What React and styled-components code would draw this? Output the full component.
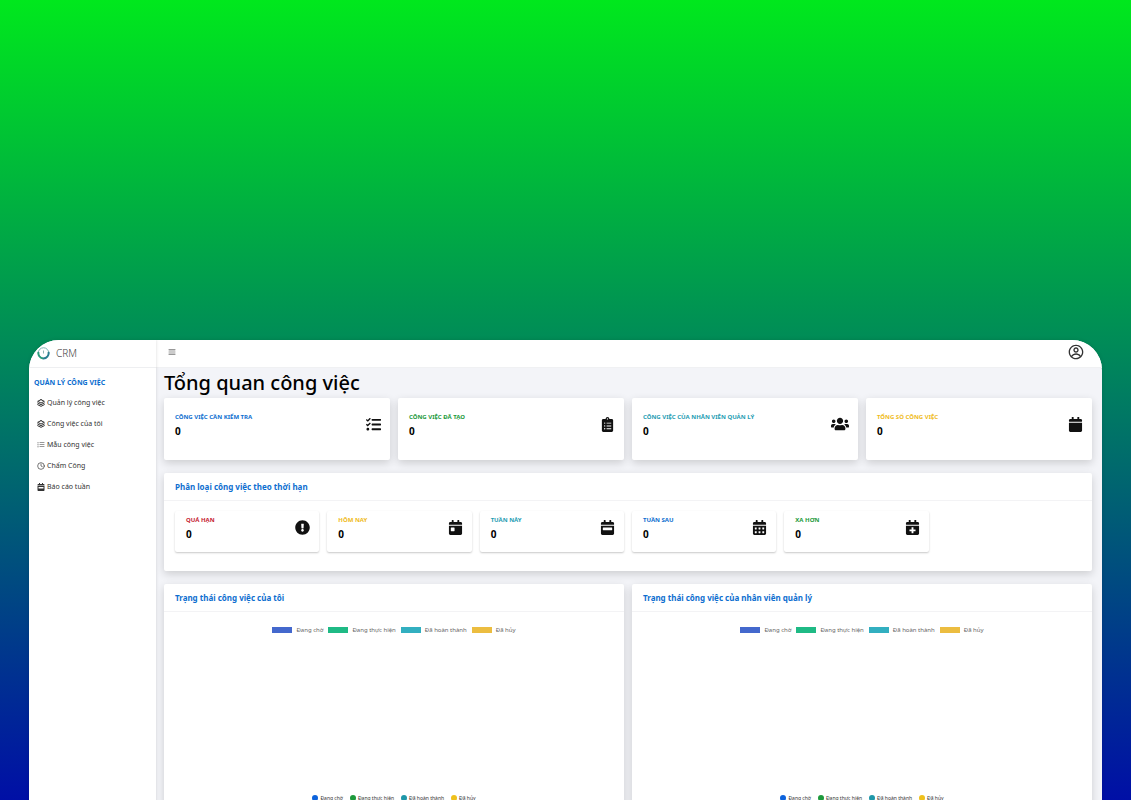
import React from "react";
import styled, { createGlobalStyle } from "styled-components";
import {
  FaTasks,
  FaClipboardList,
  FaUsers,
  FaCalendar,
  FaExclamationCircle,
  FaCalendarDay,
  FaCalendarWeek,
  FaCalendarAlt,
  FaCalendarPlus,
} from "react-icons/fa";
import { FiLayers, FiClock } from "react-icons/fi";
import { BsListUl } from "react-icons/bs";
import { CgProfile } from "react-icons/cg";
import { RxHamburgerMenu } from "react-icons/rx";

const blue = "#0d6ecf";
const green = "#1d9a3c";
const teal = "#1f9db3";
const yellow = "#efbb1c";
const red = "#c5202f";

const menu = [
  { text: "Quản lý công việc", icon: <FiLayers strokeWidth={3} /> },
  { text: "Công việc của tôi", icon: <FiLayers strokeWidth={3} /> },
  { text: "Mẫu công việc", icon: <BsListUl /> },
  { text: "Chấm Công", icon: <FiClock /> },
  { text: "Báo cáo tuần", icon: <FaCalendarWeek /> },
];

const totals = [
  { name: "Công việc cần kiểm tra", value: 0, color: blue, icon: <FaTasks /> },
  { name: "Công việc đã tạo", value: 0, color: green, icon: <FaClipboardList /> },
  { name: "Công việc của nhân viên quản lý", value: 0, color: teal, icon: <FaUsers size={18} /> },
  { name: "Tổng số công việc", value: 0, color: yellow, icon: <FaCalendar /> },
];

const deadlines = [
  { name: "Quá hạn", value: 0, color: red, icon: <FaExclamationCircle /> },
  { name: "Hôm nay", value: 0, color: yellow, icon: <FaCalendarDay /> },
  { name: "Tuần này", value: 0, color: teal, icon: <FaCalendarWeek /> },
  { name: "Tuần sau", value: 0, color: blue, icon: <FaCalendarAlt /> },
  { name: "Xa hơn", value: 0, color: green, icon: <FaCalendarPlus /> },
];

const statuses = [
  { name: "Đang chờ", bar: "#4468cd", dot: "#0d63dc" },
  { name: "Đang thực hiện", bar: "#1fba85", dot: "#1d9a3c" },
  { name: "Đã hoàn thành", bar: "#32afc0", dot: "#1f97a9" },
  { name: "Đã hủy", bar: "#ecbd40", dot: "#efc11c" },
];

const charts = ["Trạng thái công việc của tôi", "Trạng thái công việc của nhân viên quản lý"];

const Logo = () => (
  <svg width="13" height="13" viewBox="0 0 26 26" fill="none" aria-hidden="true">
    <circle cx="13" cy="12" r="10.5" stroke="#7fb5b5" strokeWidth="2" />
    <path d="M3 10a10.5 10.5 0 0 0 9 12.8" stroke="#2b9c7c" strokeWidth="4" />
    <path d="M12 22.8A10.5 10.5 0 0 0 23 10" stroke="#2a7f92" strokeWidth="4" />
    <path d="M13 7v6" stroke="#8fb5b5" strokeWidth="2" />
  </svg>
);

const Legend = ({ dots }) => (
  <LegendRow $dots={dots}>
    {statuses.map((s) => (
      <LegendItem key={s.name} $dots={dots}>
        {dots ? <Dot $color={s.dot} /> : <Bar $color={s.bar} />}
        {s.name}
      </LegendItem>
    ))}
  </LegendRow>
);

const App = () => {
  return (
    <Page>
      <GlobalStyle />
      <Window>
        <Sidebar>
          <Brand href="#">
            <Logo />
            CRM
          </Brand>
          <MenuTitle>QUẢN LÝ CÔNG VIỆC</MenuTitle>
          <nav>
            {menu.map((m) => (
              <MenuLink href="#" key={m.text}>
                {m.icon}
                {m.text}
              </MenuLink>
            ))}
          </nav>
        </Sidebar>
        <Main>
          <Topbar>
            <IconButton aria-label="Menu">
              <RxHamburgerMenu size={8} />
            </IconButton>
            <IconButton aria-label="Tài khoản">
              <CgProfile size={16} />
            </IconButton>
          </Topbar>
          <Content>
            <Title>Tổng quan công việc</Title>
            <Totals>
              {totals.map((t) => (
                <TotalCard key={t.name}>
                  <div>
                    <StatName $color={t.color}>{t.name}</StatName>
                    <StatValue>{t.value}</StatValue>
                  </div>
                  <StatIcon>{t.icon}</StatIcon>
                </TotalCard>
              ))}
            </Totals>
            <Panel>
              <PanelHead>Phân loại công việc theo thời hạn</PanelHead>
              <Deadlines>
                {deadlines.map((d) => (
                  <DeadlineCard key={d.name}>
                    <div>
                      <StatName $color={d.color}>{d.name}</StatName>
                      <StatValue>{d.value}</StatValue>
                    </div>
                    <StatIcon>{d.icon}</StatIcon>
                  </DeadlineCard>
                ))}
              </Deadlines>
            </Panel>
            <Charts>
              {charts.map((c) => (
                <Panel key={c}>
                  <PanelHead>{c}</PanelHead>
                  <ChartBody>
                    <Legend />
                    <Legend dots />
                  </ChartBody>
                </Panel>
              ))}
            </Charts>
          </Content>
        </Main>
      </Window>
    </Page>
  );
};
export default App;

const GlobalStyle = createGlobalStyle`
  * {
    box-sizing: border-box;
  }
  body {
    margin: 0;
    font-family: "Noto Sans", "Open Sans", sans-serif;
    color: #111;
  }
`;

const Page = styled.div`
  height: 100vh;
  overflow: hidden;
  padding: 340px 29px 0;
  background: linear-gradient(#00e81d, #000fa6);
`;

const Window = styled.div`
  display: flex;
  border-radius: 30px 30px 0 0;
  overflow: hidden;
  background: #f3f4f8;
  box-shadow: 0 0 4px rgba(0, 0, 0, 0.12);
`;

const Sidebar = styled.aside`
  width: 127px;
  flex-shrink: 0;
  background: #fff;
  box-shadow: 0 0 3px rgba(0, 0, 0, 0.15);
  z-index: 1;
`;

const Brand = styled.a`
  height: 28px;
  display: flex;
  align-items: center;
  gap: 6px;
  padding: 0 8px 1px;
  border-bottom: 1px solid #eeeff1;
  color: #444;
  font-size: 10px;
  font-weight: 300;
  text-decoration: none;
`;

const MenuTitle = styled.h2`
  margin: 0;
  padding: 9px 5px 3px;
  color: ${blue};
  font-size: 7px;
  line-height: 12px;
  font-weight: 700;
`;

const MenuLink = styled.a`
  height: 21px;
  display: flex;
  align-items: center;
  gap: 2px;
  padding: 0 8px;
  color: #333;
  font-size: 7px;
  text-decoration: none;
  svg {
    width: 8px;
    height: 8px;
  }
`;

const Main = styled.main`
  flex: 1;
  min-width: 0;
`;

const Topbar = styled.header`
  height: 28px;
  display: flex;
  align-items: center;
  justify-content: space-between;
  padding: 0 18px 4px 12px;
  background: #fff;
  border-bottom: 1px solid #f0f1f3;
`;

const IconButton = styled.button`
  display: flex;
  padding: 0;
  border: 0;
  background: none;
  color: #333;
  cursor: pointer;
`;

const Content = styled.div`
  display: flex;
  flex-direction: column;
  gap: 13px;
  padding: 0 10px 20px 8px;
`;

const Title = styled.h1`
  margin: 0 0 -13px;
  font-size: 20px;
  line-height: 30px;
  font-weight: 500;
  color: #000;
`;

const Totals = styled.section`
  display: grid;
  grid-template-columns: repeat(4, 1fr);
  gap: 8px;
`;

const Card = styled.article`
  display: flex;
  justify-content: space-between;
  background: #fff;
  border-radius: 2px;
`;

const TotalCard = styled(Card)`
  height: 62px;
  padding: 13px 9px 0 11px;
  box-shadow: 0 3px 8px rgba(0, 0, 0, 0.16);
`;

const DeadlineCard = styled(Card)`
  height: 41px;
  padding: 3px 9px 0 11px;
  box-shadow: 0 1px 2px rgba(0, 0, 0, 0.22);
`;

const StatIcon = styled.span`
  height: 26px;
  display: flex;
  align-items: center;
  font-size: 15px;
`;

const StatName = styled.div`
  color: ${(props) => props.$color};
  font-size: 6px;
  line-height: 12px;
  font-weight: 700;
  text-transform: uppercase;
`;

const StatValue = styled.div`
  font-size: 10px;
  line-height: 16px;
  font-weight: 700;
  color: #000;
`;

const Panel = styled.section`
  background: #fff;
  border-radius: 2px;
  box-shadow: 0 3px 8px rgba(0, 0, 0, 0.16);
`;

const PanelHead = styled.h2`
  margin: 0;
  height: 28px;
  padding: 0 11px;
  border-bottom: 1px solid #f3f3f5;
  color: ${blue};
  font-size: 8px;
  line-height: 28px;
  font-weight: 700;
`;

const Deadlines = styled.div`
  display: grid;
  grid-template-columns: repeat(6, 1fr);
  gap: 8px;
  padding: 10px 11px 19px;
`;

const Charts = styled.div`
  display: grid;
  grid-template-columns: repeat(2, 1fr);
  gap: 8px;
`;

const ChartBody = styled.div`
  height: 230px;
  display: flex;
  flex-direction: column;
  gap: 158px;
  padding-top: 13px;
`;

const LegendRow = styled.div`
  display: flex;
  justify-content: center;
  gap: ${(props) => (props.$dots ? 7 : 5)}px;
`;

const LegendItem = styled.span`
  display: flex;
  align-items: center;
  gap: ${(props) => (props.$dots ? 2 : 4)}px;
  color: ${(props) => (props.$dots ? "#333" : "#666")};
  font-size: ${(props) => (props.$dots ? 5 : 6)}px;
  line-height: 10px;
`;

const Bar = styled.i`
  width: 20px;
  height: 6px;
  background: ${(props) => props.$color};
`;

const Dot = styled.i`
  width: 6px;
  height: 6px;
  border-radius: 50%;
  background: ${(props) => props.$color};
`;
